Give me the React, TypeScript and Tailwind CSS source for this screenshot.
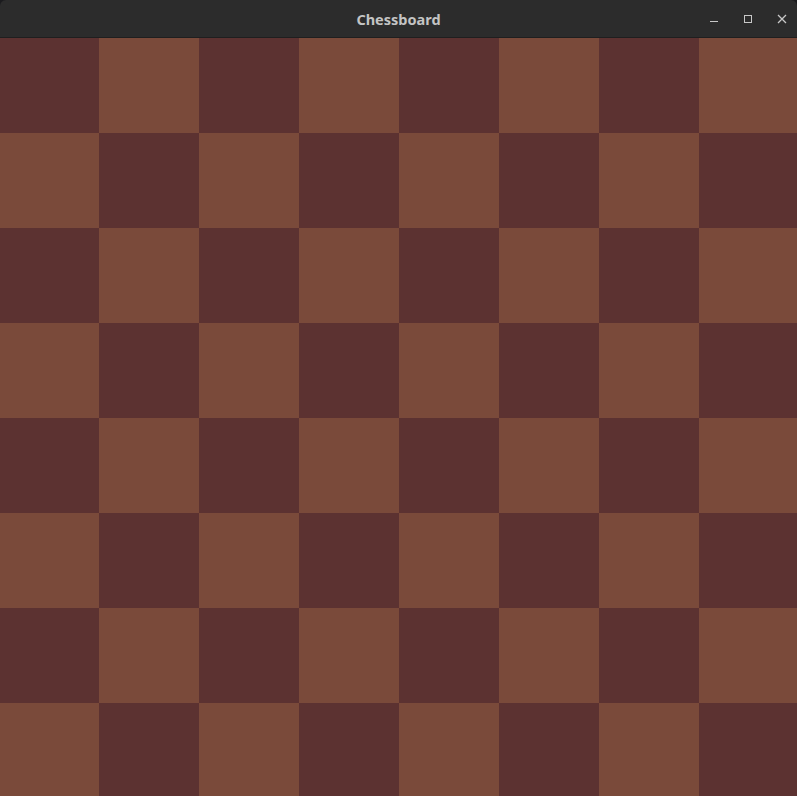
const cols = [0, 1, 2, 3, 4, 5, 6, 7];
const rows = [0, 1, 2, 3, 4, 5, 6, 7];

function TitleBar() {
  return (
    <div className="relative h-[38px] rounded-t-[6px] bg-[#2c2c2c] border-b border-[#1f1f1f] flex items-center justify-center">
      <span className="text-[14.5px] font-bold text-[#c4c4c4] font-['Noto_Sans','DejaVu_Sans',sans-serif] leading-none mt-[2px]">
        Chessboard
      </span>
      <div className="absolute right-[-2px] top-0 h-[37px] flex items-center">
        <div className="w-[34px] h-full flex items-center justify-center">
          <svg width="10" height="10" viewBox="0 0 10 10" className="mt-[6px]">
            <rect x="1" y="4" width="8" height="1" fill="#c8c8c8" />
          </svg>
        </div>
        <div className="w-[34px] h-full flex items-center justify-center">
          <svg width="10" height="10" viewBox="0 0 10 10">
            <rect x="1.5" y="1.5" width="7" height="7" fill="none" stroke="#c8c8c8" strokeWidth="1" />
          </svg>
        </div>
        <div className="w-[34px] h-full flex items-center justify-center">
          <svg width="10" height="10" viewBox="0 0 10 10">
            <path d="M1 1 L9 9 M9 1 L1 9" stroke="#c8c8c8" strokeWidth="1.3" />
          </svg>
        </div>
      </div>
    </div>
  );
}

export default function App() {
  return (
    <div className="w-[797px] h-[796px] overflow-hidden bg-[#1b1b1e]">
      <TitleBar />
      <div className="grid grid-cols-[99px_repeat(7,100px)] auto-rows-[95px]">
        {rows.map((r) =>
          cols.map((c) => (
            <div
              key={`${r}-${c}`}
              className={(r + c) % 2 === 0 ? "bg-[#5c3231]" : "bg-[#7a4a3a]"}
            />
          ))
        )}
      </div>
    </div>
  );
}
